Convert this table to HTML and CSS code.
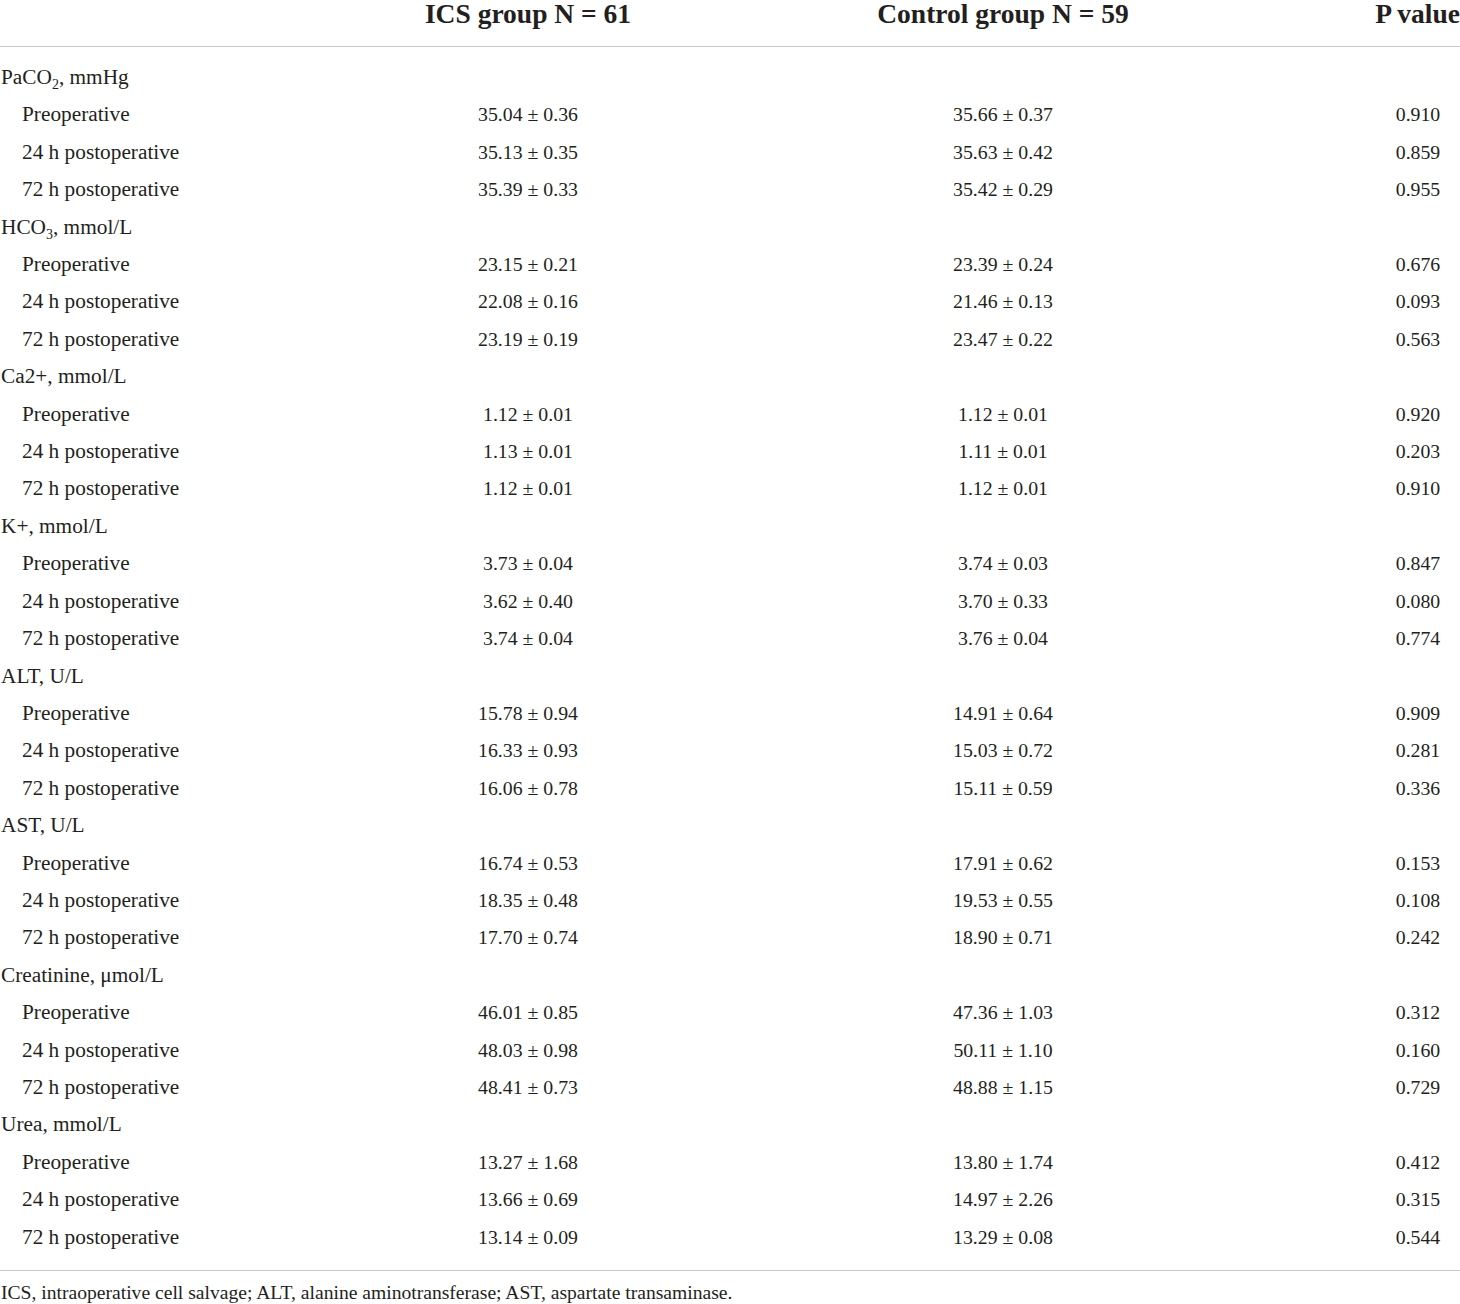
FILE: index.html
```html
<!DOCTYPE html>
<html lang="en">
<head>
<meta charset="UTF-8">
<title>Blood gas and biochemistry — ICS vs control</title>
<link rel="stylesheet" href="styles.css">
</head>
<body>
<table class="results">
  <colgroup>
    <col class="c-label"><col class="c-ics"><col class="c-ctrl"><col class="c-p">
  </colgroup>
  <thead>
    <tr>
      <th></th>
      <th>ICS group N = 61</th>
      <th>Control group N = 59</th>
      <th class="p">P value</th>
    </tr>
  </thead>
  <tbody>
    <tr class="cat first"><td>PaCO<sub>2</sub>, mmHg</td><td></td><td></td><td></td></tr>
    <tr><td class="sub">Preoperative</td><td>35.04 ± 0.36</td><td>35.66 ± 0.37</td><td class="p">0.910</td></tr>
    <tr><td class="sub">24 h postoperative</td><td>35.13 ± 0.35</td><td>35.63 ± 0.42</td><td class="p">0.859</td></tr>
    <tr><td class="sub">72 h postoperative</td><td>35.39 ± 0.33</td><td>35.42 ± 0.29</td><td class="p">0.955</td></tr>

    <tr class="cat"><td>HCO<sub>3</sub>, mmol/L</td><td></td><td></td><td></td></tr>
    <tr><td class="sub">Preoperative</td><td>23.15 ± 0.21</td><td>23.39 ± 0.24</td><td class="p">0.676</td></tr>
    <tr><td class="sub">24 h postoperative</td><td>22.08 ± 0.16</td><td>21.46 ± 0.13</td><td class="p">0.093</td></tr>
    <tr><td class="sub">72 h postoperative</td><td>23.19 ± 0.19</td><td>23.47 ± 0.22</td><td class="p">0.563</td></tr>

    <tr class="cat"><td>Ca2+, mmol/L</td><td></td><td></td><td></td></tr>
    <tr><td class="sub">Preoperative</td><td>1.12 ± 0.01</td><td>1.12 ± 0.01</td><td class="p">0.920</td></tr>
    <tr><td class="sub">24 h postoperative</td><td>1.13 ± 0.01</td><td>1.11 ± 0.01</td><td class="p">0.203</td></tr>
    <tr><td class="sub">72 h postoperative</td><td>1.12 ± 0.01</td><td>1.12 ± 0.01</td><td class="p">0.910</td></tr>

    <tr class="cat"><td>K+, mmol/L</td><td></td><td></td><td></td></tr>
    <tr><td class="sub">Preoperative</td><td>3.73 ± 0.04</td><td>3.74 ± 0.03</td><td class="p">0.847</td></tr>
    <tr><td class="sub">24 h postoperative</td><td>3.62 ± 0.40</td><td>3.70 ± 0.33</td><td class="p">0.080</td></tr>
    <tr><td class="sub">72 h postoperative</td><td>3.74 ± 0.04</td><td>3.76 ± 0.04</td><td class="p">0.774</td></tr>

    <tr class="cat"><td>ALT, U/L</td><td></td><td></td><td></td></tr>
    <tr><td class="sub">Preoperative</td><td>15.78 ± 0.94</td><td>14.91 ± 0.64</td><td class="p">0.909</td></tr>
    <tr><td class="sub">24 h postoperative</td><td>16.33 ± 0.93</td><td>15.03 ± 0.72</td><td class="p">0.281</td></tr>
    <tr><td class="sub">72 h postoperative</td><td>16.06 ± 0.78</td><td>15.11 ± 0.59</td><td class="p">0.336</td></tr>

    <tr class="cat"><td>AST, U/L</td><td></td><td></td><td></td></tr>
    <tr><td class="sub">Preoperative</td><td>16.74 ± 0.53</td><td>17.91 ± 0.62</td><td class="p">0.153</td></tr>
    <tr><td class="sub">24 h postoperative</td><td>18.35 ± 0.48</td><td>19.53 ± 0.55</td><td class="p">0.108</td></tr>
    <tr><td class="sub">72 h postoperative</td><td>17.70 ± 0.74</td><td>18.90 ± 0.71</td><td class="p">0.242</td></tr>

    <tr class="cat"><td>Creatinine, μmol/L</td><td></td><td></td><td></td></tr>
    <tr><td class="sub">Preoperative</td><td>46.01 ± 0.85</td><td>47.36 ± 1.03</td><td class="p">0.312</td></tr>
    <tr><td class="sub">24 h postoperative</td><td>48.03 ± 0.98</td><td>50.11 ± 1.10</td><td class="p">0.160</td></tr>
    <tr><td class="sub">72 h postoperative</td><td>48.41 ± 0.73</td><td>48.88 ± 1.15</td><td class="p">0.729</td></tr>

    <tr class="cat"><td>Urea, mmol/L</td><td></td><td></td><td></td></tr>
    <tr><td class="sub">Preoperative</td><td>13.27 ± 1.68</td><td>13.80 ± 1.74</td><td class="p">0.412</td></tr>
    <tr><td class="sub">24 h postoperative</td><td>13.66 ± 0.69</td><td>14.97 ± 2.26</td><td class="p">0.315</td></tr>
    <tr class="last"><td class="sub">72 h postoperative</td><td>13.14 ± 0.09</td><td>13.29 ± 0.08</td><td class="p">0.544</td></tr>
  </tbody>
</table>
<p class="note">ICS, intraoperative cell salvage; ALT, alanine aminotransferase; AST, aspartate transaminase.</p>
</body>
</html>
```

FILE: styles.css
```css
body { margin: 0; background: #fff; color: #231f20; font-family: "Liberation Serif", "Times New Roman", serif; width: 1460px; }

.results { width: 1460px; border-collapse: collapse; table-layout: fixed; }
.c-label { width: 300px; }
.c-ics { width: 456px; }
.c-ctrl { width: 494px; }
.c-p { width: 210px; }

.results th { font-size: 27.5px; font-weight: bold; line-height: 28px; padding: 0 0 18px; text-align: center; white-space: nowrap; border-bottom: 1px solid #c8c8c8; }
.results th.p { text-align: right; }
.results td.p { padding-left: 126px; }

.results td { font-size: 19.8px; line-height: 37.4px; padding: 0; text-align: center; white-space: nowrap; }
.results td:first-child { text-align: left; font-size: 21.3px; padding-left: 1px; }
.results td.sub { padding-left: 22px; }
.results tr.first td { padding-top: 12px; }
.results tr.last td { padding-bottom: 14px; border-bottom: 1px solid #c8c8c8; }
.results sub { font-size: 14px; line-height: 0; }

.note { margin: 11px 0 0; padding-left: 1px; font-size: 19.6px; line-height: 22px; }
```
